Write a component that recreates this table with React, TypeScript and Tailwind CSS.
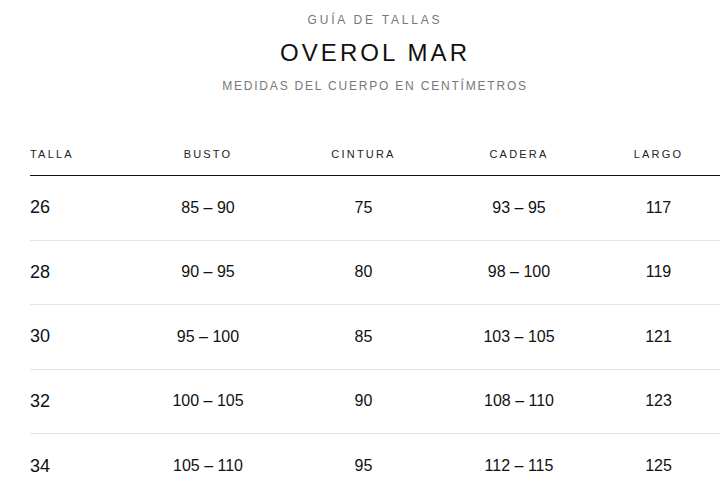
const COLUMNS = ["TALLA", "BUSTO", "CINTURA", "CADERA", "LARGO"];

const ROWS = [
  ["26", "85 – 90", "75", "93 – 95", "117"],
  ["28", "90 – 95", "80", "98 – 100", "119"],
  ["30", "95 – 100", "85", "103 – 105", "121"],
  ["32", "100 – 105", "90", "108 – 110", "123"],
  ["34", "105 – 110", "95", "112 – 115", "125"],
];

const GRID = "grid grid-cols-[100px_156px_155px_156px_123px]";

export default function App() {
  return (
    <div
      className="h-[496px] w-[726px] overflow-hidden bg-white pl-[30px]"
      style={{ fontFamily: '"Liberation Sans", Arial, sans-serif' }}
    >
      <div className="w-[690px]">
        <div className="flex flex-col items-center pt-[12px] text-center">
          <p className="text-[12px] leading-[16px] tracking-[2.8px] text-[#777]">
            GUÍA DE TALLAS
          </p>
          <h1 className="mt-[9px] text-[24px] leading-[32px] tracking-[3.1px] text-[#111]">
            OVEROL MAR
          </h1>
          <p className="mt-[9px] text-[12px] leading-[16px] tracking-[1.8px] text-[#777]">
            MEDIDAS DEL CUERPO EN CENTÍMETROS
          </p>
        </div>

        <div className={`${GRID} mt-[38px] h-[44px] items-center border-b border-[#111]`}>
          {COLUMNS.map((c, i) => (
            <div
              key={c}
              className={`text-[11px] leading-[16px] tracking-[0.2em] text-[#222] ${
                i === 0 ? "text-left" : "text-center"
              }`}
            >
              {c}
            </div>
          ))}
        </div>

        {ROWS.map((row, r) => (
          <div
            key={row[0]}
            className={`${GRID} h-[64.5px] items-center ${
              r < ROWS.length - 1 ? "border-b border-[#e6e6e6]" : ""
            }`}
          >
            {row.map((cell, i) =>
              i === 0 ? (
                <div key={i} className="text-left text-[18px] text-[#111]">
                  {cell}
                </div>
              ) : (
                <div key={i} className="text-center text-[16px] text-[#111]">
                  {cell}
                </div>
              ),
            )}
          </div>
        ))}
      </div>
    </div>
  );
}
